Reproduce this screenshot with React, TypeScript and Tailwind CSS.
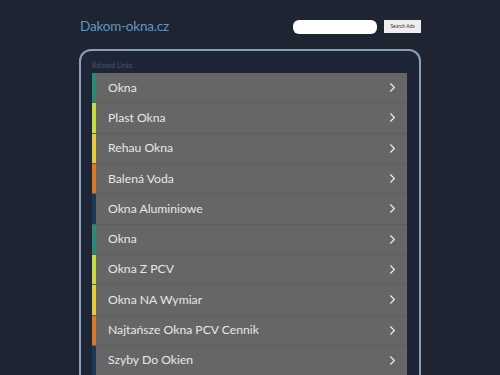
import React from 'react';
import { ChevronRight } from 'lucide-react';

const links = [
  { label: 'Okna', stripe: 'bg-[#2b8a72]' },
  { label: 'Plast Okna', stripe: 'bg-[#c9da47]' },
  { label: 'Rehau Okna', stripe: 'bg-[#e2cc3e]' },
  { label: 'Balená Voda', stripe: 'bg-[#d8782b]' },
  { label: 'Okna Aluminiowe', stripe: 'bg-[#1b3a5a]' },
  { label: 'Okna', stripe: 'bg-[#2b8a72]' },
  { label: 'Okna Z PCV', stripe: 'bg-[#c9da47]' },
  { label: 'Okna NA Wymiar', stripe: 'bg-[#e2cc3e]' },
  { label: 'Najtańsze Okna PCV Cennik', stripe: 'bg-[#d8782b]' },
  { label: 'Szyby Do Okien', stripe: 'bg-[#1b3a5a]' },
];

const App: React.FC = () => {
  return (
    <div className="min-h-[375px] h-[375px] overflow-hidden bg-[#1f2433] font-['Lato',sans-serif]">
      <div className="mx-auto w-[342px]">
        <header className="flex items-center justify-between h-[49px] pt-[4px] pl-[1px]">
          <h1 className="text-[13.5px] text-[#5d97c4] tracking-[-0.2px]">Dakom-okna.cz</h1>
          <div className="flex items-center gap-[7px]">
            <input
              type="text"
              className="w-[84px] h-[14px] rounded-[6px] bg-white border-0 outline-none"
            />
            <button className="h-[13px] w-[37px] bg-[#eeeeee] text-[#333] text-[5px] leading-none">
              Search Ads
            </button>
          </div>
        </header>

        <section className="border-2 border-[#8a9fb8] rounded-[12px] bg-[#1e2537] pl-[11px] pr-[12px] h-[400px]">
          <div className="h-[22px] pt-[11px] text-[7px] leading-none text-[#4a5468]">Related Links</div>
          <ul>
            {links.map((link, i) => (
              <li
                key={i}
                className="flex items-center h-[30.33px] bg-[#666666] border-b border-[#5e5e5e]"
              >
                <span className={`w-[4px] h-full ${link.stripe}`} />
                <span className="flex-1 pl-[12px] text-[12.2px] text-[#e6e6e6]">{link.label}</span>
                <ChevronRight size={15} strokeWidth={1.75} className="mr-[7px] text-[#eeeeee]" />
              </li>
            ))}
          </ul>
        </section>
      </div>
    </div>
  );
};

export default App;
